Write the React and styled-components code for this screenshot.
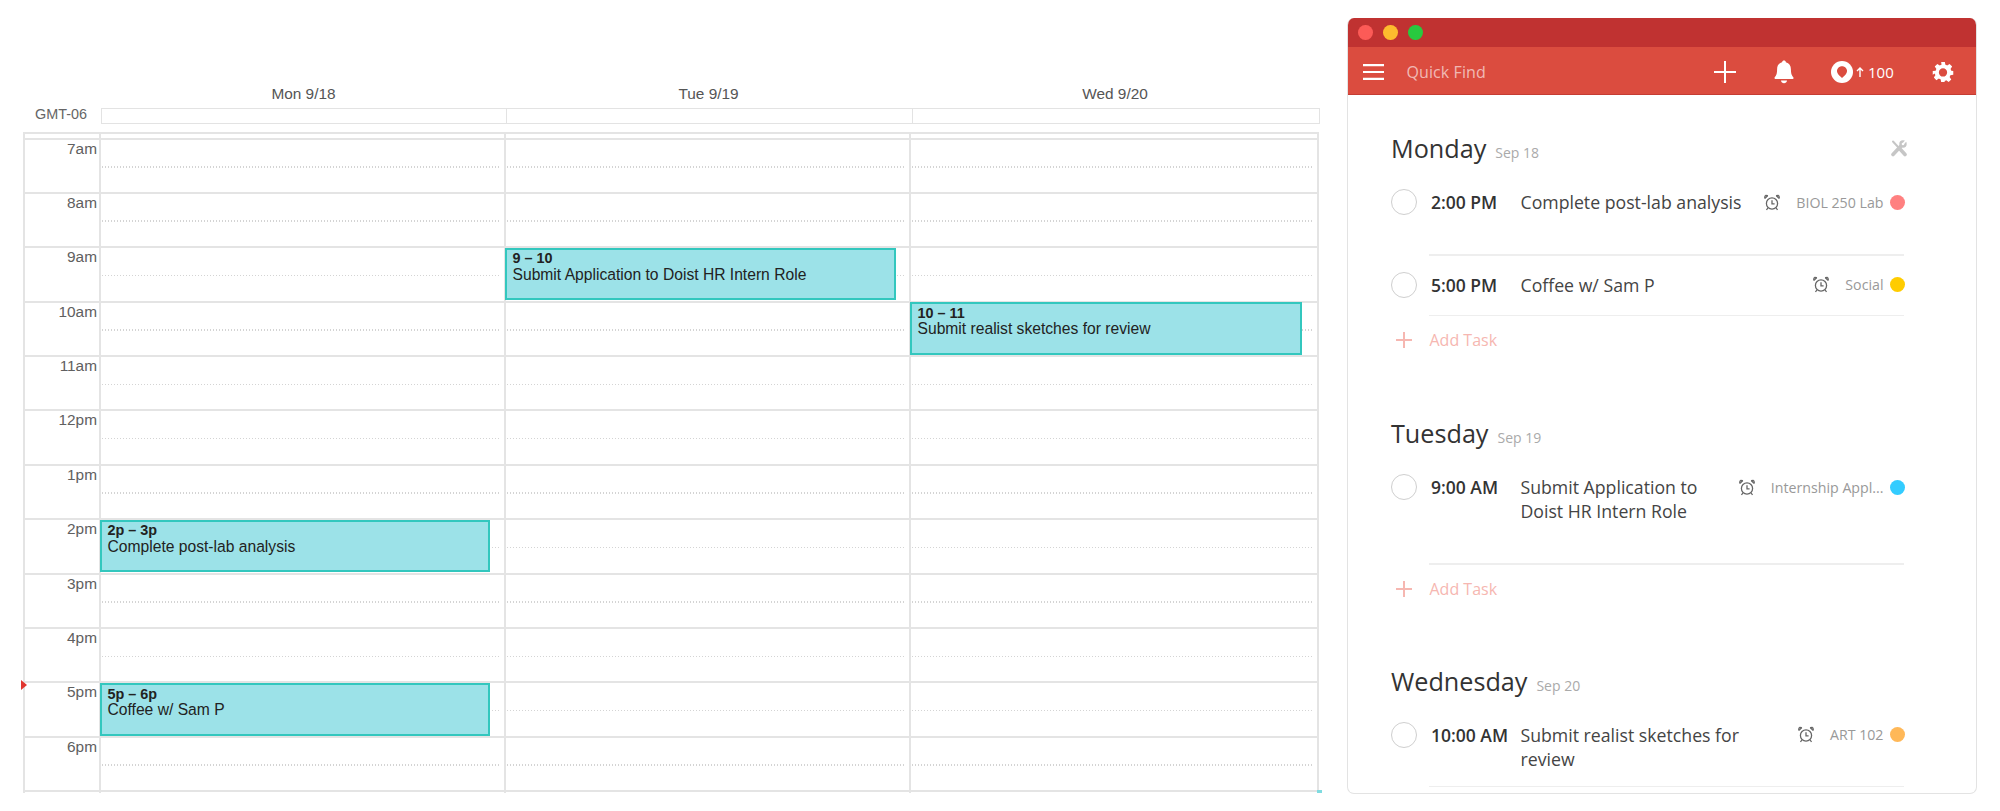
import React from 'react';
import styled, { createGlobalStyle } from 'styled-components';

const Global = createGlobalStyle`
  html, body { margin: 0; padding: 0; background: #fff; }
  body { width: 2000px; height: 811px; overflow: hidden; }
  * { box-sizing: border-box; }
`;

const Page = styled.div`
  width: 2000px;
  height: 811px;
  display: flex;
  align-items: flex-start;
`;

/* ---------- calendar ---------- */
const Calendar = styled.section`
  width: 1347px;
  padding: 85px 0 0 23px;
  font-family: "Liberation Sans", Arial, sans-serif;
  color: #555;
`;
const DayHeads = styled.div`
  display: grid;
  grid-template-columns: 78px 405px 405px 408px;
  height: 23px;
`;
const DayHead = styled.div`
  font-size: 15.4px;
  line-height: 18px;
  text-align: center;
  color: #555;
`;
const AllDayRow = styled.div`
  display: grid;
  grid-template-columns: 78px 406px 406px 407px;
  height: 16px;
`;
const Tz = styled.div`
  font-size: 14.4px;
  line-height: 13px;
  color: #666;
  text-align: right;
  padding-right: 14px;
`;
const AllDayCell = styled.div`
  border: 1.5px solid #e3e3e3;
  border-left-width: ${p => (p.$first ? '1.5px' : '0')};
`;
const Grid = styled.div`
  position: relative;
  margin-top: 7.5px;
  width: 1296px;
  height: 661.5px;
  display: grid;
  grid-template-columns: 78px 405px 405px 408px;
  border-top: 2px solid #e4e4e4;
  overflow: visible;
`;
const Col = styled.div`
  position: relative;
  border-right: 2px solid #e4e4e4;
  border-left: ${p => (p.$gutter ? '2px solid #e4e4e4' : '0')};
`;
const TopBand = styled.div`
  height: 6px;
  border-bottom: 2px solid #e4e4e4;
`;
const HourCell = styled.div`
  height: 54.4px;
  border-bottom: 2px solid #e4e4e4;
  position: relative;
  &::after {
    content: '';
    position: absolute;
    left: 1px;
    right: 3px;
    top: 26.5px;
    height: 1.5px;
    background: repeating-linear-gradient(90deg, #d4d4d4 0 1.5px, transparent 1.5px 3px);
  }
`;
const HourLabel = styled.div`
  height: 54.4px;
  border-bottom: 2px solid #e4e4e4;
  padding: 0 2px 0 0;
  text-align: right;
  font-size: 15.4px;
  line-height: 18px;
  color: #606060;
`;
const Event = styled.div`
  position: absolute;
  z-index: 2;
  left: -1px;
  top: ${p => p.$top}px;
  width: ${p => p.$w}px;
  height: 52.5px;
  background: #9ce2e8;
  border: 2px solid #33c7be;
  padding: 0.5px 5.5px;
  color: #222;
  font-size: 15.65px;
  line-height: 16.5px;
`;
const EventTime = styled.div`
  font-weight: 700;
  font-size: 14.4px;
`;
const NowMark = styled.div`
  position: absolute;
  left: -2px;
  top: ${p => p.$top}px;
  width: 0;
  height: 0;
  border-left: 6px solid #e0352f;
  border-top: 5px solid transparent;
  border-bottom: 5px solid transparent;
  z-index: 3;
`;
const Corner = styled.div`
  position: absolute;
  right: -3px;
  bottom: 0;
  width: 5px;
  height: 3px;
  background: #7fdbe0;
`;

/* ---------- todoist window ---------- */
const Win = styled.section`
  width: 630px;
  height: 776px;
  margin-top: 18px;
  display: flex;
  flex-direction: column;
  border: 1.5px solid #e3e3e3;
  border-top: 0;
  border-radius: 7px;
  overflow: hidden;
  font-family: "Open Sans", "Noto Sans", sans-serif;
  background: #fff;
`;
const TitleBar = styled.div`
  height: 29px;
  flex: none;
  background: #c03231;
  display: flex;
  align-items: center;
  gap: 10.5px;
  padding-left: 10px;
`;
const Light = styled.span`
  width: 14.5px;
  height: 15px;
  border-radius: 50%;
  background: ${p => p.$c};
`;
const Toolbar = styled.div`
  height: 48px;
  flex: none;
  display: flex;
  align-items: center;
  padding-top: 2px;
  background: #db4c3f;
  border-bottom: 1.5px solid #c53c33;
  color: #fff;
`;
const ToolBtn = styled.span`
  display: flex;
  margin-left: ${p => p.$ml || 0};
  justify-content: center;
  align-items: center;
`;
const Search = styled.span`
  font-size: 16px;
  margin-left: 23px;
  width: 307px;
  color: rgba(255, 255, 255, 0.62);
  letter-spacing: 0.1px;
`;
const Karma = styled.span`
  font-size: 15px;
  margin-left: 3.5px;
  display: flex;
  align-items: center;
  gap: 4px;
  color: #fff;
`;
const Body = styled.div`
  flex: 1;
  min-height: 0;
  padding: 0 71px 0 42.5px;
`;
const DayBlock = styled.div`
  padding-top: ${p => p.$pt}px;
`;
const DayTitle = styled.div`
  display: flex;
  align-items: baseline;
  height: 34px;
  position: relative;
  line-height: 32px;
  padding-left: 0.5px;
`;
const DayName = styled.span`
  font-size: 25.2px;
  color: #333;
`;
const DayDate = styled.span`
  font-size: 14px;
  margin-left: 9px;
  color: #aaa;
`;
const Tools = styled.span`
  position: absolute;
  right: -2.5px;
  top: 7px;
  display: flex;
`;
const Task = styled.div`
  display: grid;
  grid-template-columns: 26px 104px minmax(0, 1fr) auto;
  margin-top: ${p => p.$mt || 0}px;
  align-items: start;
`;
const Check = styled.span`
  width: 26px;
  height: 26px;
  border: 1.5px solid #cfcfcf;
  border-radius: 50%;
  margin-top: -1px;
`;
const Time = styled.span`
  font-size: 17.5px;
  line-height: 24px;
  font-weight: 600;
  color: #333;
  padding-left: 14.5px;
  white-space: nowrap;
`;
const Title = styled.span`
  font-size: 17.7px;
  line-height: 24px;
  color: #444;
  width: ${p => p.$w || 'auto'};
`;
const Meta = styled.span`
  display: flex;
  align-items: center;
  height: 24px;
`;
const Alarm = styled.span`
  display: flex;
  margin-right: 16px;
`;
const Project = styled.span`
  font-size: 14.2px;
  color: #999;
  white-space: nowrap;
`;
const Dot = styled.span`
  width: 15px;
  height: 15px;
  border-radius: 50%;
  background: ${p => p.$c};
  margin-left: 6.5px;
`;
const Divider = styled.div`
  height: 1.5px;
  background: #eeeeee;
  margin: ${p => p.$mt}px 0 0 38px;
  width: 475.5px;
`;
const AddTask = styled.div`
  display: flex;
  align-items: center;
  height: 24px;
  margin-top: ${p => p.$mt}px;
  color: #f6b7b1;
  font-size: 16px;
`;
const AddIcon = styled.span`
  display: flex;
  width: 39px;
  padding-left: 5px;
`;

const Ic = styled.svg`
  display: block;
  flex: none;
`;

const Hamburger = () => (
  <Ic width="21" height="16" viewBox="0 0 21 16">
    <path d="M0 1.2h21M0 8h21M0 14.8h21" stroke="#fff" strokeWidth="2.2" />
  </Ic>
);
const Plus = ({ s = 22, w = 2, c = '#fff' }) => (
  <Ic width={s} height={s} viewBox="0 0 22 22">
    <path d="M11 0v22M0 11h22" stroke={c} strokeWidth={w * 22 / s} />
  </Ic>
);
const Bell = () => (
  <Ic width="20" height="24" viewBox="0 0 20 24">
    <path fill="#fff" d="M10 0.5c1 0 1.8.7 1.9 1.7 3.3.8 5 3.6 5 7 0 3.6.5 6 2.5 8.3.4.5.2 1.5-.7 1.5H1.3c-.9 0-1.1-1-.7-1.5 2-2.3 2.5-4.7 2.5-8.3 0-3.4 1.7-6.2 5-7C8.2 1.2 9 .5 10 .5z" />
    <path fill="#fff" d="M7 20.5h6c-.2 1.7-1.4 2.8-3 2.8s-2.8-1.1-3-2.8z" />
  </Ic>
);
const KarmaIcon = () => (
  <Ic width="22" height="22" viewBox="0 0 22 22">
    <circle cx="11" cy="11" r="11" fill="#fff" />
    <path fill="#db4c3f" d="M11 5.2c-3 0-5 2.2-5 4.800 0 2.800 3 5.400 5 7 2-1.600 5-4.200 5-7 0-2.600-2-4.800-5-4.800z" />
  </Ic>
);
const Arrow = () => (
  <Ic width="8" height="10" viewBox="0 0 8 10">
    <path d="M4 1v9M1 4 4 1l3 3" fill="none" stroke="#fff" strokeWidth="1.4" />
  </Ic>
);
const Gear = () => (
  <Ic width="22" height="22" viewBox="0 0 24 24">
    <path fill="#fff" fillRule="evenodd" d="M10 1h4l.6 3.2c.7.2 1.300.5 1.900.8l2.700-1.800 2.800 2.800-1.800 2.700c.4.6.6 1.200.8 1.900L23.200 11v4l-3.200.5c-.2.7-.4 1.300-.8 1.900l1.800 2.700-2.800 2.800-2.700-1.800c-.6.3-1.200.6-1.900.8L14 23h-4l-.6-3.100c-.7-.2-1.300-.5-1.900-.8l-2.700 1.800-2.800-2.800 1.800-2.700c-.4-.6-.6-1.200-.8-1.900L.8 15v-4l3.200-.4c.2-.7.4-1.300.8-1.900L3 6 5.800 3.200l2.700 1.800c.6-.3 1.200-.6 1.900-.8L10 1zm2 7a4.500 4.500 0 1 0 0 9 4.500 4.500 0 0 0 0-9z" />
  </Ic>
);
const ToolsIcon = () => (
  <Ic width="18" height="18" viewBox="0 0 18 18">
    <g stroke="#c6c6c6" strokeLinecap="round" fill="none">
      <path d="M3 2.500 8.500 8.500" strokeWidth="2" />
      <path d="M10 10 15 15.500" strokeWidth="3.600" />
      <path d="M3 15.500 10.500 7.500" strokeWidth="3.600" />
      <circle cx="13" cy="5" r="2.500" strokeWidth="2.400" />
      <path d="M13.500 4.500 16 1.500" stroke="#fff" strokeWidth="1.800" strokeLinecap="butt" />
    </g>
  </Ic>
);
const AlarmIcon = () => (
  <Ic width="16" height="17" viewBox="0 0 16 17">
    <g fill="none" stroke="#666" strokeWidth="1.3">
      <circle cx="8" cy="9.5" r="5.600" />
      <path d="M8 6.300v3.500h2.600" />
      <path d="M1 4.400 3.800 1.500M15 4.400 12.200 1.500M3.800 14l-1.300 2M12.200 14l1.300 2" />
      <path d="M1 4.400c-.5-1.300-.2-2.300 1-3l1.800.2M15 4.400c.5-1.300.2-2.300-1-3l-1.800.2" />
    </g>
  </Ic>
);

const HOURS = ['7am', '8am', '9am', '10am', '11am', '12pm', '1pm', '2pm', '3pm', '4pm', '5pm', '6pm'];
const H = 54.4;
const BASE = 5.5;

const evTop = i => BASE + i * H;

const DayColumn = ({ events = [] }) => (
  <Col>
    <TopBand />
    {HOURS.map(h => <HourCell key={h} />)}
    {events.map(e => (
      <Event key={e.title} $top={evTop(e.at)} $w={e.w}>
        <EventTime>{e.time}</EventTime>
        {e.title}
      </Event>
    ))}
  </Col>
);

const TaskRow = ({ time, title, w, project, color, mt }) => (
  <Task $mt={mt}>
    <Check />
    <Time>{time}</Time>
    <Title $w={w}>{title}</Title>
    <Meta>
      <Alarm><AlarmIcon /></Alarm>
      <Project>{project}</Project>
      <Dot $c={color} />
    </Meta>
  </Task>
);

const Add = ({ mt }) => (
  <AddTask $mt={mt}>
    <AddIcon><Plus s={16} w={2} c="#f6b7b1" /></AddIcon>
    Add Task
  </AddTask>
);

export default function App() {
  return (
    <Page>
      <Global />
      <Calendar>
        <DayHeads>
          <div />
          <DayHead>Mon 9/18</DayHead>
          <DayHead>Tue 9/19</DayHead>
          <DayHead>Wed 9/20</DayHead>
        </DayHeads>
        <AllDayRow>
          <Tz>GMT-06</Tz>
          <AllDayCell $first />
          <AllDayCell />
          <AllDayCell />
        </AllDayRow>
        <Grid>
          <Col $gutter>
            <TopBand />
            {HOURS.map(h => <HourLabel key={h}>{h}</HourLabel>)}
          </Col>
          <DayColumn events={[
            { time: '2p – 3p', title: 'Complete post-lab analysis', at: 7, w: 390 },
            { time: '5p – 6p', title: 'Coffee w/ Sam P', at: 10, w: 390 },
          ]} />
          <DayColumn events={[
            { time: '9 – 10', title: 'Submit Application to Doist HR Intern Role', at: 2, w: 391 },
          ]} />
          <DayColumn events={[
            { time: '10 – 11', title: 'Submit realist sketches for review', at: 3, w: 392 },
          ]} />
          <NowMark $top={546} />
          <Corner />
        </Grid>
      </Calendar>

      <Win>
        <TitleBar>
          <Light $c="#fc5b57" />
          <Light $c="#fdbb2e" />
          <Light $c="#28c93f" />
        </TitleBar>
        <Toolbar>
          <ToolBtn $ml="14.5px"><Hamburger /></ToolBtn>
          <Search>Quick Find</Search>
          <ToolBtn><Plus /></ToolBtn>
          <ToolBtn $ml="38px"><Bell /></ToolBtn>
          <ToolBtn $ml="37px"><KarmaIcon /></ToolBtn>
          <Karma><Arrow />100</Karma>
          <ToolBtn $ml="38px"><Gear /></ToolBtn>
        </Toolbar>
        <Body>
          <DayBlock $pt={37}>
            <DayTitle>
              <DayName>Monday</DayName>
              <DayDate>Sep 18</DayDate>
              <Tools><ToolsIcon /></Tools>
            </DayTitle>
            <TaskRow mt={24} time="2:00 PM" title="Complete post-lab analysis" project="BIOL 250 Lab" color="#ff8080" />
            <Divider $mt={39} />
            <TaskRow mt={17} time="5:00 PM" title="Coffee w/ Sam P" project="Social" color="#ffcc00" />
            <Divider $mt={17} />
            <Add mt={12} />
          </DayBlock>
          <DayBlock $pt={65}>
            <DayTitle>
              <DayName>Tuesday</DayName>
              <DayDate>Sep 19</DayDate>
            </DayTitle>
            <TaskRow mt={24} time="9:00 AM" title="Submit Application to Doist HR Intern Role" w="222px" project="Internship Appl..." color="#33ccff" />
            <Divider $mt={40} />
            <Add mt={12} />
          </DayBlock>
          <DayBlock $pt={64}>
            <DayTitle>
              <DayName>Wednesday</DayName>
              <DayDate>Sep 20</DayDate>
            </DayTitle>
            <TaskRow mt={24} time="10:00 AM" title="Submit realist sketches for review" w="222px" project="ART 102" color="#ffb858" />
            <Divider $mt={15} />
          </DayBlock>
        </Body>
      </Win>
    </Page>
  );
}
